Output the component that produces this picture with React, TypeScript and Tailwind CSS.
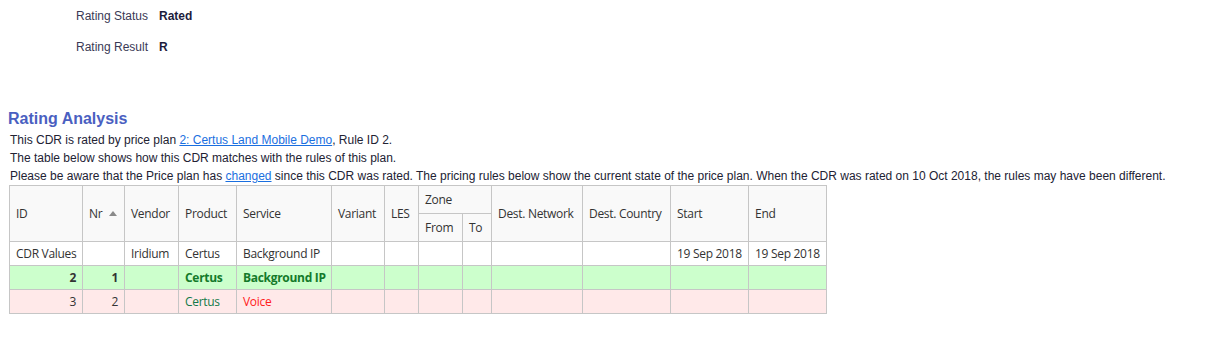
import React from 'react';

const cols = [
  { key: 'id', w: 73 },
  { key: 'nr', w: 42 },
  { key: 'vendor', w: 54 },
  { key: 'product', w: 58 },
  { key: 'service', w: 95 },
  { key: 'variant', w: 53 },
  { key: 'les', w: 34 },
  { key: 'from', w: 44 },
  { key: 'to', w: 29 },
  { key: 'net', w: 91 },
  { key: 'country', w: 88 },
  { key: 'start', w: 78 },
  { key: 'end', w: 78 },
];

const th = 'border border-[#c6c6c6] px-[6px] text-left font-normal align-middle';
const td = 'border border-[#c6c6c6] px-[6px] h-[24px] align-middle whitespace-nowrap';

const App: React.FC = () => {
  return (
    <div className="min-h-screen bg-white text-[12px] text-[#2b2b3a]" style={{ fontFamily: '"Liberation Sans", Arial, sans-serif' }}>
      <div className="pl-[76px] pt-[8px]">
        <div className="flex items-center h-[16px]">
          <span className="w-[83px] text-[#3a3a55]">Rating Status</span>
          <span className="font-bold text-[#1c1c3c]">Rated</span>
        </div>
        <div className="flex items-center h-[16px] mt-[15px]">
          <span className="w-[83px] text-[#3a3a55]">Rating Result</span>
          <span className="font-bold text-[#1c1c3c]">R</span>
        </div>
      </div>

      <h2 className="ml-[8px] mt-[54px] text-[16px] leading-[20px] font-bold text-[#4a5fc1]">Rating Analysis</h2>
      <div className="ml-[10px] mt-[2px] leading-[18px] text-[#222233]">
        <p>
          This CDR is rated by price plan <a href="#" className="text-[#1a6fe0] underline">2: Certus Land Mobile Demo</a>, Rule ID 2.
        </p>
        <p>The table below shows how this CDR matches with the rules of this plan.</p>
        <p>
          Please be aware that the Price plan has <a href="#" className="text-[#1a6fe0] underline">changed</a> since this CDR was rated. The pricing rules below show the current state of the price plan. When the CDR was rated on 10 Oct 2018, the rules may have been different.
        </p>
      </div>

      <table
        className="ml-[9px] border-collapse table-fixed text-[12px] text-[#333]"
        style={{ fontFamily: '"Open Sans", "Noto Sans", sans-serif', width: 818 }}
      >
        <colgroup>
          {cols.map((c) => (
            <col key={c.key} style={{ width: c.w }} />
          ))}
        </colgroup>
        <thead className="bg-[#f9f9f9] tracking-[-0.3px]">
          <tr className="h-[28px]">
            <th rowSpan={2} className={th}>ID</th>
            <th rowSpan={2} className={th}>
              <span className="flex items-center justify-between">
                Nr
                <svg width="8" height="5" viewBox="0 0 8 5" className="mr-[1px]">
                  <path d="M0 5 L4 0 L8 5 Z" fill="#8a8a8a" />
                </svg>
              </span>
            </th>
            <th rowSpan={2} className={th}>Vendor</th>
            <th rowSpan={2} className={th}>Product</th>
            <th rowSpan={2} className={th}>Service</th>
            <th rowSpan={2} className={th}>Variant</th>
            <th rowSpan={2} className={th}>LES</th>
            <th colSpan={2} className={th}>Zone</th>
            <th rowSpan={2} className={th}>Dest. Network</th>
            <th rowSpan={2} className={th}>Dest. Country</th>
            <th rowSpan={2} className={th}>Start</th>
            <th rowSpan={2} className={th}>End</th>
          </tr>
          <tr className="h-[28px]">
            <th className={th}>From</th>
            <th className={th}>To</th>
          </tr>
        </thead>
        <tbody className="tracking-[-0.3px]">
          <tr className="bg-white">
            <td className={td}>CDR Values</td>
            <td className={td}></td>
            <td className={td}>Iridium</td>
            <td className={td}>Certus</td>
            <td className={td}>Background IP</td>
            <td className={td}></td>
            <td className={td}></td>
            <td className={td}></td>
            <td className={td}></td>
            <td className={td}></td>
            <td className={td}></td>
            <td className={`${td} px-[5px]`}>19 Sep 2018</td>
            <td className={`${td} px-[5px]`}>19 Sep 2018</td>
          </tr>
          <tr className="bg-[#ccffcc]">
            <td className={`${td} text-right font-bold`}>2</td>
            <td className={`${td} text-right font-bold`}>1</td>
            <td className={td}></td>
            <td className={`${td} font-bold text-[#137a2a]`}>Certus</td>
            <td className={`${td} font-bold text-[#137a2a]`}>Background IP</td>
            <td className={td}></td>
            <td className={td}></td>
            <td className={td}></td>
            <td className={td}></td>
            <td className={td}></td>
            <td className={td}></td>
            <td className={td}></td>
            <td className={td}></td>
          </tr>
          <tr className="bg-[#ffe9e9]">
            <td className={`${td} text-right`}>3</td>
            <td className={`${td} text-right`}>2</td>
            <td className={td}></td>
            <td className={`${td} text-[#137a4a]`}>Certus</td>
            <td className={`${td} text-[#ff2020]`}>Voice</td>
            <td className={td}></td>
            <td className={td}></td>
            <td className={td}></td>
            <td className={td}></td>
            <td className={td}></td>
            <td className={td}></td>
            <td className={td}></td>
            <td className={td}></td>
          </tr>
        </tbody>
      </table>
    </div>
  );
};

export default App;
